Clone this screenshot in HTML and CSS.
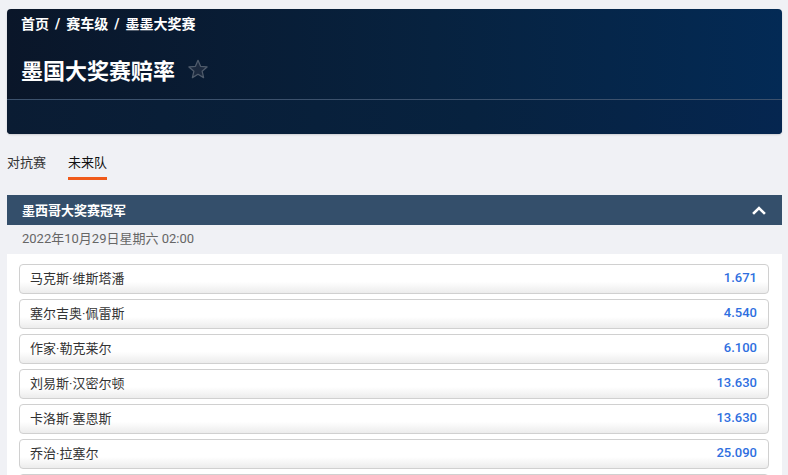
FILE: index.html
```html
<!DOCTYPE html>
<html lang="zh">
<head>
<meta charset="utf-8">
<link rel="stylesheet" href="styles.css">
</head>
<body>
<div class="page">
  <header class="hero">
    <div class="hero-top">
      <nav class="crumbs"><span>首页</span><span class="sep">/</span><span>赛车级</span><span class="sep">/</span><span>墨墨大奖赛</span></nav>
      <div class="title-row">
        <h1 class="title">墨国大奖赛赔率</h1>
        <svg class="star" width="22" height="22" viewBox="0 0 24 24"><path d="M12 2.5l2.8 6.6 7.1.6-5.4 4.7 1.6 7-6.1-3.7-6.1 3.7 1.6-7-5.4-4.7 7.1-.6z" fill="#1c2a3f" stroke="#4f5b6b" stroke-width="1.4" stroke-linejoin="round"/></svg>
      </div>
    </div>
    <div class="hero-bottom"></div>
  </header>

  <div class="tabs">
    <span class="tab">对抗赛</span>
    <span class="tab active">未来队</span>
  </div>

  <section class="market">
    <div class="market-head">
      <span class="market-name">墨西哥大奖赛冠军</span>
      <svg class="chev" width="14" height="10" viewBox="0 0 14 10"><path d="M2 8l5-5 5 5" fill="none" stroke="#fff" stroke-width="2.6" stroke-linecap="square"/></svg>
    </div>
    <div class="market-date">2022年10月29日星期六 02:00</div>
    <div class="list">
      <div class="row"><span class="name">马克斯·维斯塔潘</span><span class="odds">1.671</span></div>
      <div class="row"><span class="name">塞尔吉奥·佩雷斯</span><span class="odds">4.540</span></div>
      <div class="row"><span class="name">作家·勒克莱尔</span><span class="odds">6.100</span></div>
      <div class="row"><span class="name">刘易斯·汉密尔顿</span><span class="odds">13.630</span></div>
      <div class="row"><span class="name">卡洛斯·塞恩斯</span><span class="odds">13.630</span></div>
      <div class="row"><span class="name">乔治·拉塞尔</span><span class="odds">25.090</span></div>
      <div class="row"></div>
    </div>
  </section>
</div>
</body>
</html>
```

FILE: styles.css
```css
* { box-sizing: border-box; }
html, body { margin: 0; padding: 0; }
body {
  background: #f0f1f5;
  font-family: Roboto, "Noto Sans CJK SC", sans-serif;
  color: #333;
  height: 475px;
  overflow: hidden;
}
.page { padding: 9px 6px 0 7px; }
.hero {
  border-radius: 4px;
  background: linear-gradient(90deg, #0a1629 0%, #07223f 55%, #032a55 100%);
  box-shadow: 0 1px 2px rgba(0,0,0,0.15);
  overflow: hidden;
}
.hero-top {
  height: 91px;
  border-bottom: 1px solid #3c516c;
  padding: 6px 14px 0 14px;
}
.crumbs {
  display: flex;
  gap: 6px;
  color: #fff;
  font-size: 14px;
  font-weight: 700;
  line-height: 18px;
}
.title-row {
  display: flex;
  align-items: center;
  margin-top: 24px;
  gap: 12px;
}
.title {
  margin: 0;
  color: #fff;
  font-size: 22px;
  font-weight: 700;
  line-height: 30px;
}
.star { margin-top: -6px; }
.hero-bottom {
  height: 34px;
  background: linear-gradient(90deg, #0a1c33 0%, #07223f 60%, #052650 100%);
}
.tabs {
  display: flex;
  gap: 22px;
  height: 46px;
  padding-top: 20px;
  font-size: 13px;
}
.tab {
  color: #333;
  line-height: 17px;
  height: 26px;
}
.tab.active {
  color: #111;
  border-bottom: 3px solid #f05a1a;
}
.market { margin-top: 15px; }
.market-head {
  height: 30px;
  background: #344f6b;
  display: flex;
  align-items: center;
  justify-content: space-between;
  padding: 0 16px 2px 15px;
}
.market-name {
  color: #fff;
  font-size: 13px;
  font-weight: 700;
}
.chev { margin-top: 2px; }
.market-date {
  height: 29px;
  line-height: 27px;
  padding-left: 15px;
  font-size: 13px;
  color: #666;
}
.list {
  background: #fff;
  padding: 10px 13px 0 12px;
  display: flex;
  flex-direction: column;
  gap: 5px;
}
.row {
  height: 30px;
  flex: none;
  border: 1px solid #d0d0d0;
  border-radius: 4px;
  background: linear-gradient(180deg, #fff 0%, #fff 60%, #ececec 100%);
  display: flex;
  align-items: center;
  justify-content: space-between;
  padding: 0 11px 4px 10px;
  font-size: 13px;
}
.name { color: #333; }
.odds {
  color: #2f6fe0;
  font-weight: 500;
}
```
